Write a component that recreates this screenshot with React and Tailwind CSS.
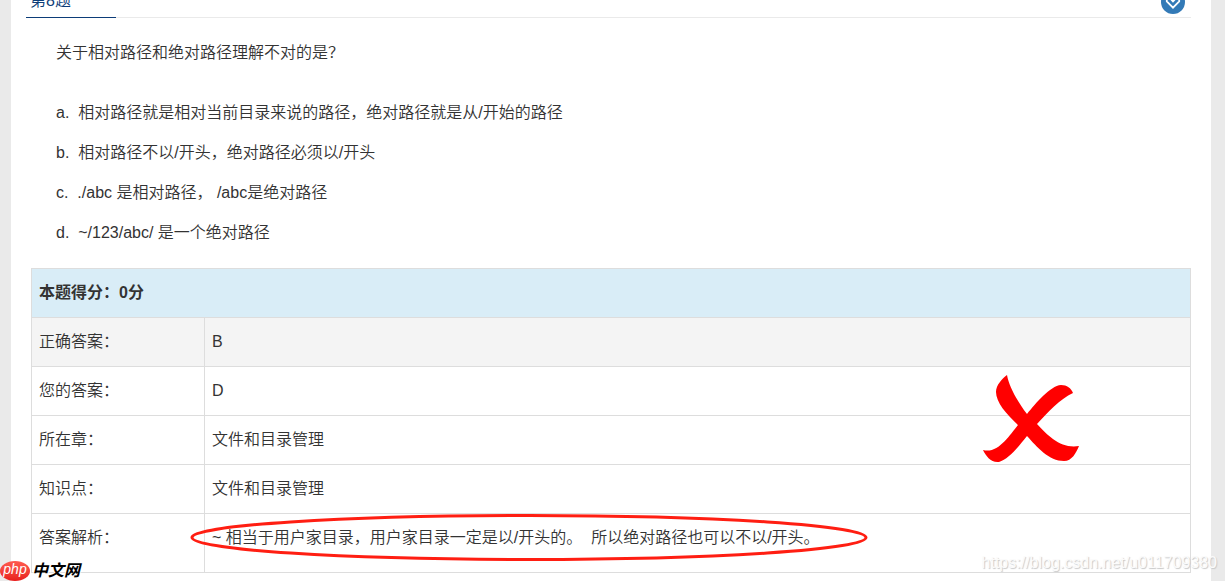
const options = [
  { key: 'a', text: '相对路径就是相对当前目录来说的路径，绝对路径就是从/开始的路径' },
  { key: 'b', text: '相对路径不以/开头，绝对路径必须以/开头' },
  { key: 'c', text: './abc 是相对路径， /abc是绝对路径' },
  { key: 'd', text: '~/123/abc/ 是一个绝对路径' },
];

function QuestionHeader() {
  return (
    <header className="ml-[15px] mr-5 flex h-[18px] items-end overflow-hidden">
      <h2 className="w-[90px] shrink-0 border-b border-[#0c3c78] pl-1 leading-8 text-[#0c3c78]">第8题</h2>
      <div className="flex flex-1 justify-end border-b border-[#eaeaea] pr-1.5 pb-[3px]">
        <button type="button" aria-label="展开" className="size-6 shrink-0">
          <svg viewBox="0 0 24 24" className="size-6" aria-hidden="true">
            <circle cx="12" cy="12" r="12" fill="#337ab7" />
            <path d="M5.8 9 L8.5 6 H15.5 L18.2 9 V11.5 L12 17.7 L5.8 11.5 Z" fill="none" stroke="#fff" strokeWidth="1.8" />
            <path d="M9.8 9.2 L12 11.6 L14.2 9.2" fill="none" stroke="#fff" strokeWidth="1.6" />
          </svg>
        </button>
      </div>
    </header>
  );
}

function WrongMark() {
  return (
    <svg viewBox="0 0 96 88" className="absolute top-2 right-[111px] z-10 h-[88px] w-24" role="img" aria-label="错误">
      <path
        d="M24 0 C19 4 13 10 13 17 C13 27 23 39 35 50 C26 61 15 79 0 75 C3 81 8 88 16 87 C26 84 36 71 44 61 C54 72 66 86 81 86 C89 86 93 78 96 71 C78 74 65 61 54 49 C65 37 77 24 90 18 C88 13 84 10 78 10 C67 11 53 28 44 39 C35 27 26 12 24 0 Z"
        fill="#ff0000"
      />
    </svg>
  );
}

function Row({ label, shaded, tall, children }) {
  return (
    <tr className={shaded ? 'bg-[#f4f4f4]' : ''}>
      <th scope="row" className={`border border-[#ddd] px-[7px] text-left align-top font-[350] ${tall ? 'h-[59px]' : ''}`}>
        {label}
      </th>
      <td className="relative border border-[#ddd] px-[7px] align-top">{children}</td>
    </tr>
  );
}

function ResultTable() {
  return (
    <table className="w-full table-fixed border-collapse leading-[48px]">
      <colgroup>
        <col className="w-[173px]" />
        <col />
      </colgroup>
      <thead>
        <tr className="bg-[#d9edf7]">
          <th colSpan={2} className="border border-[#ddd] px-[7px] text-left font-bold">本题得分：0分</th>
        </tr>
      </thead>
      <tbody>
        <Row label="正确答案：" shaded>B</Row>
        <Row label="您的答案：">
          D
          <WrongMark />
        </Row>
        <Row label="所在章：">文件和目录管理</Row>
        <Row label="知识点：">文件和目录管理</Row>
        <Row label="答案解析：" tall>
          ~ 相当于用户家目录，用户家目录一定是以/开头的。&nbsp; 所以绝对路径也可以不以/开头。
          <svg viewBox="0 0 678 48" className="absolute top-0 -left-[15px] h-12 w-[678px]" aria-hidden="true">
            <ellipse cx="339" cy="23.5" rx="337" ry="22" fill="none" stroke="#ff1e12" strokeWidth="3" />
          </svg>
        </Row>
      </tbody>
    </table>
  );
}

function SiteLogo() {
  return (
    <div className="absolute bottom-0 left-0 flex h-5 items-center gap-0.5 leading-5">
      <span className="flex h-5 w-[30px] items-center justify-center rounded-[50%] bg-linear-to-b from-[#ff5a4f] to-[#e81c1c] pb-1 text-[14px] text-white italic">
        php
      </span>
      <span className="text-base font-bold text-black italic [text-shadow:1px_0_white,-1px_0_white,0_1px_white,0_-1px_white]">中文网</span>
    </div>
  );
}

export default function App() {
  return (
    <div className="relative min-h-screen overflow-hidden bg-[#eaeaea] pr-[14px] pl-[11px] font-['Liberation_Sans','Noto_Sans_CJK_SC',sans-serif] text-base font-[350] text-[#333]">
      <main className="min-h-screen bg-white">
        <QuestionHeader />
        <section className="mt-[15px] pr-5 pl-[45px] leading-10">
          <p>关于相对路径和绝对路径理解不对的是？</p>
          <ul className="mt-5">
            {options.map((option) => (
              <li key={option.key}>
                {option.key}.&nbsp; {option.text}
              </li>
            ))}
          </ul>
        </section>
        <section className="mt-[15px] px-5">
          <ResultTable />
        </section>
      </main>
      <SiteLogo />
      <p className="absolute right-2 bottom-2 leading-5 text-[#fbfbfb] [text-shadow:1px_1px_1px_#c8c8c8]">https://blog.csdn.net/u011709380</p>
    </div>
  );
}
